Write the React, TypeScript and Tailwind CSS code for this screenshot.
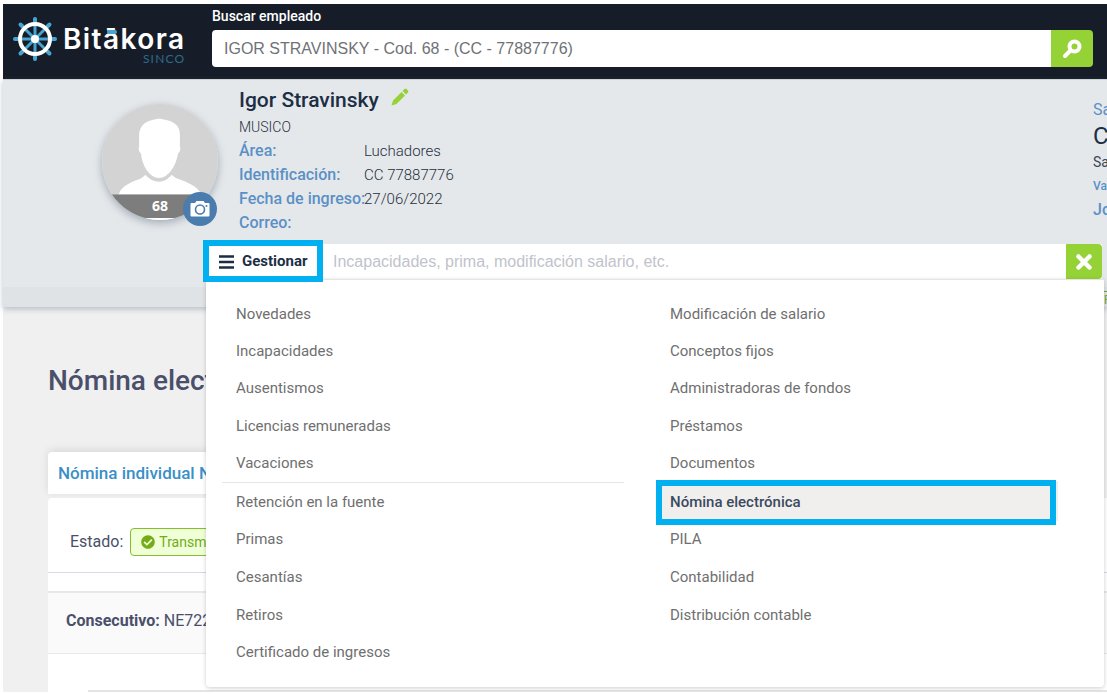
import { useState } from "react";
import { FaCheckCircle } from "react-icons/fa";

type MenuGroup = Array<string>;

const leftGroups: Array<MenuGroup> = [
  [
    "Novedades",
    "Incapacidades",
    "Ausentismos",
    "Licencias remuneradas",
    "Vacaciones",
  ],
  [
    "Retención en la fuente",
    "Primas",
    "Cesantías",
    "Retiros",
    "Certificado de ingresos",
  ],
];

const rightGroups: Array<MenuGroup> = [
  [
    "Modificación de salario",
    "Conceptos fijos",
    "Administradoras de fondos",
    "Préstamos",
    "Documentos",
  ],
  ["Nómina electrónica", "PILA", "Contabilidad", "Distribución contable"],
];

const employeeFields = [
  { label: "Área:", value: "Luchadores" },
  { label: "Identificación:", value: "CC 77887776" },
  { label: "Fecha de ingreso:", value: "27/06/2022" },
  { label: "Correo:", value: "" },
];

const HelmIcon = () => (
  <svg viewBox="0 0 44 44" className="size-11 shrink-0" aria-hidden="true">
    <g stroke="#45a5d0" strokeWidth="3" strokeLinecap="round">
      <path d="M22 2v40M2 22h40M8 8l28 28M36 8L8 36" />
      <path
        d="M22 2v3M22 39v3M2 22h3M39 22h3M7.5 7.5l2 2M34.5 34.5l2 2M36.5 7.5l-2 2M9.5 34.5l-2 2"
        strokeWidth="4"
      />
    </g>
    <circle cx="22" cy="22" r="15" fill="none" stroke="#fff" strokeWidth="4" />
    <circle cx="22" cy="22" r="4" fill="#fff" />
  </svg>
);

const Logo = () => (
  <a href="#" className="flex w-[209px] shrink-0 items-start pt-[13px] pl-2.5">
    <HelmIcon />
    <span className="flex flex-col items-end pt-2.5 pl-1.5 font-['Inter']">
      <span className="text-[28px] leading-6 font-semibold tracking-wider text-white">
        Bit
        <span className="relative">
          ā
          <span className="absolute top-2 left-1 h-1 w-2.5 rounded-sm bg-[#45a5d0]" />
        </span>
        kora
      </span>
      <span className="font-['Lato'] text-xs leading-4 tracking-widest text-[#2c6b8c]">
        SINCO
      </span>
    </span>
  </a>
);

const Avatar = () => (
  <div className="relative size-[116px] shrink-0 rounded-full shadow-[0_3px_8px_rgba(60,80,100,0.4)]">
    <svg viewBox="0 0 118 118" className="size-full" aria-hidden="true">
      <clipPath id="avatar">
        <circle cx="59" cy="59" r="59" />
      </clipPath>
      <g clipPath="url(#avatar)">
        <path d="M0 0h118v118H0z" fill="#d3d3d3" />
        <path
          d="M17 92c2-8 13-13 22-16 2-1 4-3 5-4 4 4 8 7 14 7s9-3 13-7c2 2 3 3 6 4 9 3 21 8 24 16z"
          fill="#fff"
        />
        <path
          d="M58 14c-12 2-21 5-21 18 0 4 0 7 0 11-1 3 0 6 2 8 1 11 8 25 19 25s18-14 20-25c2-2 3-5 2-8V31c0-11-8-15-22-17z"
          fill="#fff"
          stroke="#d3d3d3"
          strokeWidth="1.5"
        />
        <path d="M0 92h118v24H0z" fill="#7d7d7d" />
        <path d="M0 116h118v2H0z" fill="#fff" />
      </g>
    </svg>
    <span className="absolute inset-x-0 bottom-1.5 text-center font-['Open_Sans'] text-sm leading-4 font-bold text-white">
      68
    </span>
    <button
      type="button"
      aria-label="Cambiar foto"
      className="absolute right-px -bottom-1.5 flex size-[34px] items-center justify-center rounded-full bg-[#4b7cae]"
    >
      <svg viewBox="0 0 20 18" className="h-[18px] w-5" aria-hidden="true">
        <path
          d="M1.500 3H5l1.500-2h7L15 3h3.500q1 0 1 1v11.500q0 1-1 1h-17q-1 0-1-1V4q0-1 1-1z"
          fill="#fff"
        />
        <circle cx="10" cy="9.500" r="4.500" fill="none" stroke="#4b7cae" strokeWidth="1.600" />
        <circle cx="16.500" cy="6" r="1" fill="#4b7cae" />
      </svg>
    </button>
  </div>
);

const MenuColumn = ({ groups }: { groups: Array<MenuGroup> }) => (
  <div className="flex-1">
    {groups.map((group, index) => (
      <ul
        key={group[0]}
        className={
          index === 0
            ? "grid h-[188px] grid-rows-5 border-b border-[#e4e4e4]"
            : "grid h-[188px] grid-rows-5"
        }
      >
        {group.map((item) => {
          const active = item === "Nómina electrónica";
          return (
            <li key={item} className={active ? "relative bg-[#f1efee]" : ""}>
              <a
                href="#"
                className={
                  active
                    ? "flex h-full items-center px-3.5 text-[15px] leading-5 font-medium text-[#3b4a60]"
                    : "flex h-full items-center px-3.5 text-[15px] leading-5 text-[#6f6f6f]"
                }
              >
                {item}
              </a>
              {active && (
                <span className="pointer-events-none absolute -top-[3px] right-0.5 -bottom-1 left-0 border-6 border-[#00b0f0]" />
              )}
            </li>
          );
        })}
      </ul>
    ))}
  </div>
);

const ManageMenu = () => {
  const [query, setQuery] = useState("");

  return (
    <div className="relative z-10 mr-[5px] ml-[203px] flex h-[35px] bg-white">
      <div className="relative flex w-[117px] shrink-0">
        <button
          type="button"
          className="flex flex-1 items-center gap-2 pl-[13px] text-[15px] font-bold text-[#1c2e45]"
        >
          <svg viewBox="0 0 15 14" className="h-3.5 w-[15px]" aria-hidden="true">
            <path d="M0 1.500h15M0 7h15M0 12.500h15" stroke="#1c2e45" strokeWidth="2.400" />
          </svg>
          Gestionar
        </button>
        <span className="pointer-events-none absolute -top-1 right-0 -bottom-[3px] -left-[3px] z-20 border-6 border-[#00b0f0]" />
      </div>
      <input
        type="text"
        aria-label="Gestionar"
        placeholder="Incapacidades, prima, modificación salario, etc."
        value={query}
        onChange={(event) => setQuery(event.target.value)}
        className="min-w-0 flex-1 px-2.5 font-['Liberation_Sans'] text-base outline-none placeholder:text-[#bfc3cb]"
      />
      <button
        type="button"
        aria-label="Cerrar"
        className="flex w-9 shrink-0 items-center justify-center rounded-r bg-[#95d236]"
      >
        <svg viewBox="0 0 16 16" className="size-4" aria-hidden="true">
          <path d="M2.500 2.500l11 11M13.500 2.500l-11 11" stroke="#fff" strokeWidth="4.500" strokeLinecap="round" />
        </svg>
      </button>
      <nav className="absolute top-full -right-0.5 left-0 flex gap-8 rounded-b border-t border-[#e4e4e4] bg-white pt-[15px] pr-[46px] pb-4 pl-4 shadow-[0_1px_4px_rgba(0,0,0,0.2)]">
        <MenuColumn groups={leftGroups} />
        <MenuColumn groups={rightGroups} />
      </nav>
    </div>
  );
};

const SalarySummary = () => (
  <div className="w-3.5 overflow-hidden pt-[18px] whitespace-nowrap text-[#5b90c6]">
    <p className="text-base leading-6">Sa</p>
    <p className="text-2xl leading-7 text-[#1c2e45]">C</p>
    <p className="text-sm leading-6 text-[#3a4556]">Sa</p>
    <p className="text-xs leading-6 font-medium">Va</p>
    <p className="text-base leading-6 font-medium">Jo</p>
  </div>
);

const EmployeeHeader = () => (
  <section className="relative z-10 border-t border-[#cdd2d6] bg-[#e5e8eb] shadow-[0_2px_6px_rgba(90,110,130,0.4)]">
    <div className="flex h-[164px]">
      <div className="pt-6 pr-[21px] pl-[99px]">
        <Avatar />
      </div>
      <div className="flex-1 pt-2">
        <div className="flex items-center gap-3">
          <h1 className="text-[21px] leading-6 font-medium text-[#1c2e45]">
            Igor Stravinsky
          </h1>
          <button type="button" aria-label="Editar empleado" className="pb-1.5">
            <svg viewBox="0 0 18 18" className="size-[18px]" aria-hidden="true">
              <path
                d="M0.500 17.500l1.500-5L10.500 4l3.500 3.500L5.500 16zM11.500 3l2-2q1-.8 2 0l1.500 1.500q.8 1 0 2l-2 2z"
                fill="#95d236"
              />
            </svg>
          </button>
        </div>
        <p className="pt-[3px] text-sm leading-6 font-light text-[#26303d]">MUSICO</p>
        <dl>
          {employeeFields.map((field) => (
            <div key={field.label} className="flex leading-6">
              <dt className="w-[125px] shrink-0 text-base leading-6 font-medium whitespace-nowrap text-[#5b90c6]">
                {field.label}
              </dt>
              <dd className="text-[15px] font-light text-[#26303d]">{field.value}</dd>
            </div>
          ))}
        </dl>
      </div>
      <SalarySummary />
    </div>
    <ManageMenu />
    <div className="mt-2 flex h-5 justify-end bg-[#dfe3e6]">
      <span className="mt-1 h-3.5 w-[3px] overflow-hidden border-t border-[#7aa33c] text-xs text-[#7aa33c]">
        F
      </span>
    </div>
  </section>
);

const PayrollCard = () => (
  <main className="flex-1 bg-[#f0f0f0] pt-14 text-[#4a4f6a]">
    <h2 className="pl-[45px] text-[28px] leading-9 font-medium">
      Nómina elect
    </h2>
    <div className="mt-[53px] mr-3 ml-[45px] rounded-t bg-white px-2.5 text-[17px] leading-[42px] font-medium text-[#3a8fc8] shadow-[0_-2px_8px_rgba(0,0,0,0.1)]">
      Nómina individual N
    </div>
    <div className="mt-1 ml-[45px] rounded-tl bg-white">
      <div className="flex h-[75px] items-center gap-[7px] border-b border-[#d5d9e4] pt-3.5 pl-[22px]">
        <span className="text-base">Estado:</span>
        <span className="flex h-7 items-center gap-1 rounded-sm border border-[#86bd2c] bg-[#efffd8] px-2.5 text-sm text-[#75ab18]">
          <FaCheckCircle className="size-3.5" />
          Transmitido
        </span>
      </div>
      <div className="mt-[18px] border-t-2 border-b border-[#e8e8e8] bg-[#fafafa] pb-1 pl-[18px] text-base leading-14">
        <b className="font-bold">Consecutivo:</b> NE722
      </div>
      <div className="mt-9 ml-10 border-t-2 border-[#e4e4e4]" />
    </div>
  </main>
);

export default function App() {
  const [employee, setEmployee] = useState(
    "IGOR STRAVINSKY - Cod. 68 - (CC - 77887776)"
  );

  return (
    <div className="flex h-screen flex-col overflow-hidden bg-white pt-1 pb-0.5 pl-[3px] font-['Roboto',sans-serif]">
      <header className="flex shrink-0 bg-[#161d28] pr-3.5 pb-3">
        <Logo />
        <form className="min-w-0 flex-1" onSubmit={(event) => event.preventDefault()}>
          <label
            htmlFor="employee"
            className="block pt-0.5 pb-1 text-sm leading-5 font-medium text-white"
          >
            Buscar empleado
          </label>
          <div className="flex h-[37px]">
            <input
              id="employee"
              type="text"
              value={employee}
              onChange={(event) => setEmployee(event.target.value)}
              className="min-w-0 flex-1 rounded-l bg-white px-3 font-['Liberation_Sans'] text-base text-[#6f7277] outline-none"
            />
            <button
              type="submit"
              aria-label="Buscar"
              className="flex w-[42px] shrink-0 items-center justify-center rounded-r bg-[#95d236]"
            >
              <svg viewBox="0 0 20 20" className="size-5" aria-hidden="true">
                <circle cx="12.500" cy="7.500" r="5" fill="none" stroke="#fff" strokeWidth="4" />
                <path d="M8.500 11.500L3 17" stroke="#fff" strokeWidth="4" strokeLinecap="round" />
              </svg>
            </button>
          </div>
        </form>
      </header>
      <EmployeeHeader />
      <PayrollCard />
    </div>
  );
}
